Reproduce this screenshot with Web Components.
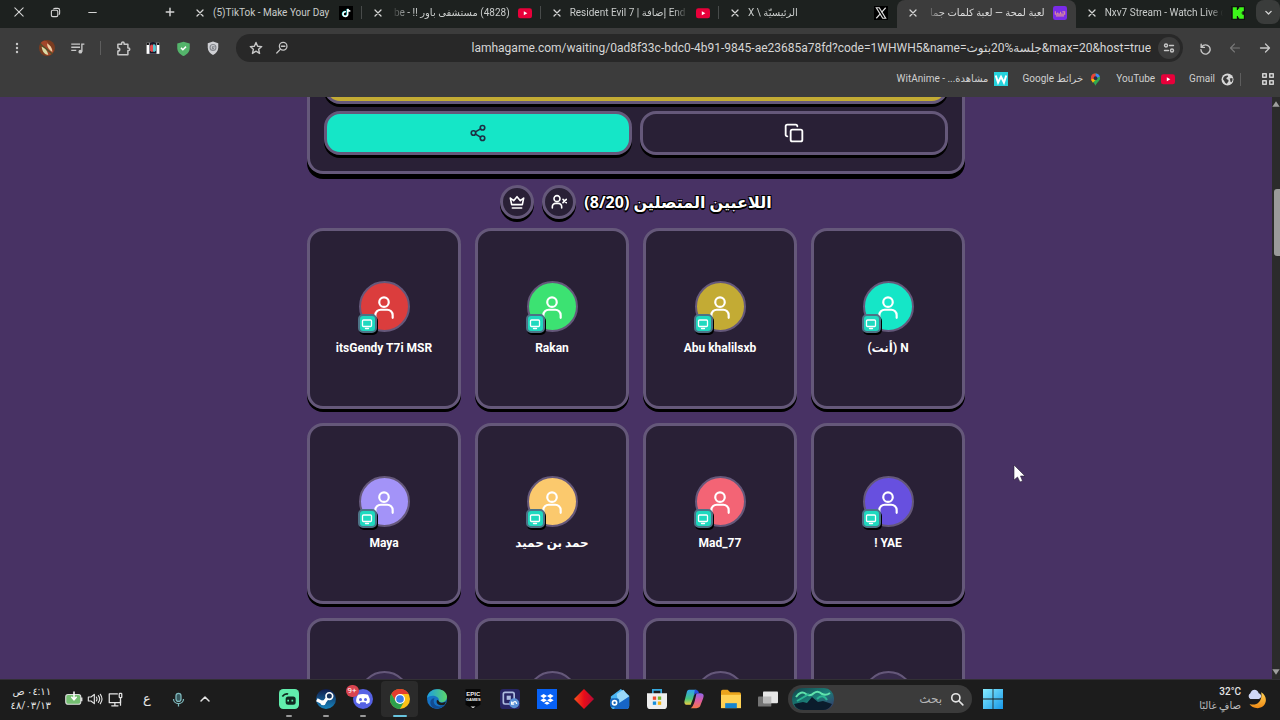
<!DOCTYPE html>
<html lang="ar">
<head>
<meta charset="utf-8">
<title>لعبة لمحة — لعبة كلمات جماعية</title>
<style>
html,body{margin:0;height:100%}
body{background:#1c1c1c;overflow:hidden;font-family:Roboto,"DejaVu Sans",sans-serif;
--line:#65587a;--card:#292036;--mint:#15e6c7;--gold:#c3ab34}
</style>
</head>
<body>
<desk-screen></desk-screen>
<script>
const make=(name,css,html)=>customElements.define(name,class extends HTMLElement{
  constructor(){super();this.attachShadow({mode:'open'})}
  connectedCallback(){
    this.shadowRoot.innerHTML=`<style>*{box-sizing:border-box}button{font:inherit;color:inherit;background:none;border:0;padding:0;margin:0}svg{display:block}a{color:inherit;text-decoration:none}${css}</style>`+(typeof html==='function'?html(this):html);
  }
});

const stroke=(d,w=2)=>`<g fill="none" stroke="currentColor" stroke-width="${w}" stroke-linecap="round" stroke-linejoin="round">${d}</g>`;
const ytube=`<rect x="0" y="4" width="24" height="17" rx="4" fill="#e8003a"/><path d="M10 9v7l6-3.500z" fill="#fff"/>`;
const ICONS={
  close:stroke('<path d="M2 2l20 20M22 2L2 22"/>',2.5),
  tabx:stroke('<path d="M3 3l18 18M21 3L3 21"/>',3.8),
  restore:stroke('<rect x="3" y="7" width="14" height="14" rx="3"/><path d="M8 4q1-1 3-1h6q4 0 4 4v6q0 2-1 3"/>',2.4),
  minus:stroke('<path d="M2 12h20"/>',3),
  plus:stroke('<path d="M12 3v18M3 12h18"/>',3.5),
  tiktok:'<rect width="24" height="24" fill="#000"/><path d="M11 9.500a4 4 0 1 0 3 4V5c1 2.500 2.500 3.500 4.500 3.500" fill="none" stroke="#2de4e4" stroke-width="2.600"/><path d="M12 10a4 4 0 1 0 3 4V5c1 2.500 2.500 3.500 4.500 3.500" fill="none" stroke="#fff" stroke-width="2.600"/>',
  youtube:ytube,
  x:'<rect width="24" height="24" fill="#000"/><path d="M4 3h5l11 18h-5z" fill="none" stroke="#ddd" stroke-width="2"/><path d="M20 3l-7 8M11 13l-7 8" stroke="#ddd" stroke-width="2"/>',
  lamha:'<rect width="24" height="24" rx="4" fill="#7a2be8"/><path d="M4 9v5h4v-3M8 14h5v-4M13 14h7v-4h-4M5 17h14" fill="none" stroke="#d78c9c" stroke-width="2"/>',
  kick:'<rect width="24" height="24" fill="#111"/><path d="M3 2h7v5h2V4.500h2V2h8v7h-2.500v2.500H17v1h2.500V15H22v7h-8v-2.500h-2V17h-2v5H3z" fill="#3df51a"/>',
  down:stroke('<path d="M5 9l7 7 7-7"/>',3.5),
  up:stroke('<path d="M4 16l8-8 8 8"/>',3),
  dots:'<g fill="currentColor"><circle cx="12" cy="4" r="2.400"/><circle cx="12" cy="12" r="2.400"/><circle cx="12" cy="20" r="2.400"/></g>',
  avatar:'<circle cx="12" cy="12" r="12" fill="#7a3c20"/><path d="M3 4c5-5 10-3 12 3l7 9c-2 5-6 8-12 7z" fill="#a3462a"/><path d="M4 10c5 1 8 5 10 12-5 0-9-4-10-12z" fill="#d9dca8"/><path d="M12 5c5 3 8 7 8 13-5-3-8-7-8-13z" fill="#efcfa3"/><path d="M2 6l18 15" stroke="#4c512c" stroke-width="2"/>',
  queue:'<g fill="none" stroke="currentColor" stroke-width="2.200"><path d="M2 5h14M2 10h14M2 15h8M19 17V5h4"/></g><circle cx="16.500" cy="17" r="3" fill="currentColor"/>',
  puzzle:stroke('<path d="M3 5h6V3.500a2 2 0 0 1 4 0V5h6v6h1a2 2 0 0 1 0 4h-1v7H3v-6c4 0 4-5 0-5z"/>',2.4),
  ext:'<rect x="1" y="3" width="22" height="19" fill="#fff"/><path d="M1 3h4v4H1zM19 3h4v4h-4z" fill="#151515"/><path d="M6 3q6-3 12 0v19H6z" fill="#171526"/><path d="M7 8q4-4 5 0v10q-3 2-5-2z" fill="#e34a4d"/><path d="M12 6q4-2 5 3v7q-2 4-5 2z" fill="#58c5cf"/>',
  shieldg:'<path d="M12 1l10 3v7c0 6-4 10-10 13C6 21 2 17 2 11V4z" fill="#54b46b"/><path d="M8 11l3 3 5-5" fill="none" stroke="#fff" stroke-width="2.400"/>',
  shieldw:'<path d="M12 1l9 3v7c0 6-4 10-9 13-5-3-9-7-9-13V4z" fill="#cfd0d4"/><circle cx="12" cy="11" r="5" fill="none" stroke="#85888e" stroke-width="2"/><path d="M15 10h-4v3h3" fill="none" stroke="#85888e" stroke-width="2"/>',
  star:stroke('<path d="M12 2.500l2.800 6.500 7 .6-5.300 4.700 1.600 7L12 17.500l-6.100 3.800 1.600-7L2.200 9.600l7-.6z"/>',2.4),
  zoom:stroke('<circle cx="14" cy="9" r="6.500"/><path d="M9.500 14L3 20.500M11 9h6"/>',2.2),
  tune:stroke('<circle cx="6" cy="7" r="3"/><path d="M13 7h8M3 17h8"/><circle cx="18" cy="17" r="3"/>',2.8),
  reload:stroke('<path d="M4 4v6h6M5 9a8.500 8.500 0 1 1-1.500 5"/>',2.6),
  back:stroke('<path d="M21 12H4M11 4l-8 8 8 8"/>',2.2),
  fwd:stroke('<path d="M3 12h17M13 4l8 8-8 8"/>',2.6),
  wit:'<rect width="24" height="24" fill="#25d3dc"/><path d="M3 6l4 12 5-10 5 10 4-12" fill="none" stroke="#fff" stroke-width="3.500"/>',
  maps:'<path d="M12 1a8.500 8.500 0 0 1 8.500 8.500c0 5-6 7-8.500 14C9.500 16.500 3.500 14.500 3.500 9.500A8.500 8.500 0 0 1 12 1z" fill="#30a952"/><path d="M12 1a8.500 8.500 0 0 1 8 5.500L12 10z" fill="#4285f4"/><path d="M12 1v9L5 15Q3 12 3.500 9A8.500 8.500 0 0 1 12 1z" fill="#ea4335"/><path d="M4 12l6-3 2 4-5 5z" fill="#fbbc04"/><circle cx="12" cy="9.500" r="3.500" fill="#282b48"/>',
  globe:'<circle cx="12" cy="12" r="11" fill="#d7d7d7"/><path d="M4 9c3-4 6-5 9-4 1 3-3 3-3 5 0 2 4 1 4 4s-2 3-3 6c-5-1-4-6-7-7zM16 10l5-1c1 4 0 6-2 8-3-1-1-4-3-7z" fill="#3c3c3c"/>',
  apps:stroke('<path d="M3 3h6v6H3zM15 3h6v6h-6zM3 15h6v6H3zM15 15h6v6h-6z"/>',2.6),
  share:stroke('<circle cx="18" cy="5" r="3"/><circle cx="6" cy="12" r="3"/><circle cx="18" cy="19" r="3"/><path d="M8.600 13.500l6.800 4M15.400 6.500l-6.800 4"/>',2.2),
  copy:stroke('<rect x="8" y="8" width="14" height="14" rx="2"/><path d="M4 16a2 2 0 0 1-2-2V4a2 2 0 0 1 2-2h10a2 2 0 0 1 2 2"/>',2.2),
  crown:stroke('<path d="M2 6l5 4 5-6 5 6 5-4-2 10H4zM5 21h14"/>',2.4),
  kickuser:stroke('<circle cx="9" cy="7" r="4.500"/><path d="M2 21v-2a5 5 0 0 1 5-5h4a5 5 0 0 1 5 5v2M18 8l5 5M23 8l-5 5"/>',2.4),
  user:stroke('<circle cx="12" cy="7.500" r="4.400"/><path d="M4 22v-2.500a5 5 0 0 1 5-5h6a5 5 0 0 1 5 5V22"/>',2),
  screen:stroke('<rect x="3" y="4" width="18" height="13" rx="2"/><path d="M9 21h6"/>',2.6),
  battery:'<rect x="1" y="6" width="20" height="13" rx="3" fill="#75bf72" stroke="#ddd" stroke-width="1.500"/><path d="M22 10v5" stroke="#ddd" stroke-width="2.500"/><path d="M12 2v10M8.500 9l3.500 4 3.500-4" fill="none" stroke="#fff" stroke-width="2"/>',
  volume:stroke('<path d="M2 9h4l5-4v14l-5-4H2zM14 9q2 3 0 6M17 7q4 5 0 10M20 5q5 7 0 14"/>',1.7),
  display:stroke('<path d="M15 3H2v14h18v-4M11 17v4M6 22h10"/><rect x="18" y="2" width="4" height="7" rx="1"/><path d="M20 9v12"/>',2),
  mic:'<g fill="none" stroke="#7fb9bd" stroke-width="2"><rect x="8" y="2" width="8" height="13" rx="4" fill="#36575c"/><path d="M4 11c0 10 16 10 16 0M12 18v5"/></g>',
  streamer:'<rect width="24" height="24" rx="5" fill="#61edac"/><rect x="8" y="9" width="12" height="10" rx="3" fill="#10281f"/><path d="M11 13v2M16 13v2" stroke="#61edac" stroke-width="2"/><path d="M4 9q3-4 7-3" fill="none" stroke="#10281f" stroke-width="2"/>',
  steam:'<defs><linearGradient id="s" x2="0" y2="1"><stop stop-color="#101c4c"/><stop offset="1" stop-color="#1784bd"/></linearGradient></defs><circle cx="12" cy="12" r="12" fill="url(#s)"/><path d="M1 13l8 4 6-8" fill="none" stroke="#fff" stroke-width="4"/><circle cx="16" cy="8.500" r="4" fill="#17345e" stroke="#fff" stroke-width="2"/><circle cx="8.500" cy="16.500" r="3" fill="#fff"/>',
  discord:'<circle cx="12" cy="12" r="12" fill="#5662e5"/><path d="M6 7q6-2 12 0 3 5 2 9-2 2-4 2l-1-2H9l-1 2q-2 0-4-2-1-4 2-9z" fill="#fff"/><circle cx="9" cy="12.500" r="1.800" fill="#5662e5"/><circle cx="15" cy="12.500" r="1.800" fill="#5662e5"/>',
  chrome:'<circle cx="12" cy="12" r="12" fill="#fbc116"/><path d="M1.600 6A12 12 0 0 1 22.400 6H12L7 15z" fill="#e33b2e"/><path d="M1.600 6A12 12 0 0 0 12 24l5-9H7z" fill="#2da14c"/><circle cx="12" cy="12" r="6" fill="#fff"/><circle cx="12" cy="12" r="4.600" fill="#3a7de8"/>',
  edge:'<defs><linearGradient id="e"><stop stop-color="#1b9de2"/><stop offset="1" stop-color="#5bd66a"/></linearGradient></defs><circle cx="12" cy="12" r="12" fill="#1673c5"/><path d="M0 11C1-3 23-3 24 9c0 8-9 8-10 5 2-5-9-9-14-3z" fill="url(#e)"/><path d="M9 11c-4 8 5 13 12 8-5 7-17 6-17-3 0-3 2-5 5-5z" fill="#124b91"/><path d="M14 14c1 3 6 3 9 1l-2 4c-6 2-11-1-9-6z" fill="#1c1c1c"/>',
  epic:'<path d="M3 0h18v19l-9 5-9-5z" fill="#070707"/><path d="M9 21h6l-3 2z" fill="#ddd"/>',
  sheets:'<rect width="24" height="24" rx="4" fill="#282665"/><rect x="4" y="4" width="13" height="14" rx="2" fill="none" stroke="#aebcdf" stroke-width="2"/><path d="M8 8h5v5H8z" fill="#aebcdf"/><circle cx="17" cy="17" r="6" fill="#5a90d8"/><path d="M14 15v3h3M15 17q4-4 5 1" fill="none" stroke="#fff" stroke-width="1.500"/>',
  dropbox:'<rect width="24" height="24" fill="#0761f5"/><path d="M8 6l4 2.500L8 11 4 8.500zM16 6l4 2.500-4 2.500-4-2.500zM8 11l4 2.500L8 16l-4-2.500zM16 11l4 2.500-4 2.500-4-2.500zM12 15l3.500 2-3.500 2-3.500-2z" fill="#fff"/>',
  ruby:'<defs><linearGradient id="r"><stop stop-color="#f6531d"/><stop offset=".5" stop-color="#e80c19"/><stop offset="1" stop-color="#b50a36"/></linearGradient></defs><path d="M12 0l12 12-12 12L0 12z" fill="url(#r)"/>',
  outlook:'<path d="M1 9L13 0l10 8v12q0 4-4 4H5q-4 0-4-4z" fill="#4ab5f4"/><path d="M8 6l8-5 7 8-13 9z" fill="#98d8fa"/><path d="M6 20L23 9v11q0 4-4 4H5z" fill="#1665c6"/><rect y="11" width="11" height="11" rx="3" fill="#1767ba"/><circle cx="5.500" cy="16.500" r="2.500" fill="none" stroke="#fff" stroke-width="2"/>',
  store:'<path d="M7 6V1h10v5" fill="none" stroke="#35a9df" stroke-width="2"/><path d="M0 5h24v15q0 4-4 4H4q-4 0-4-4z" fill="#eee"/><path d="M7 9h4v4H7z" fill="#eb4c2e"/><path d="M13 9h4v4h-4z" fill="#75b829"/><path d="M7 15h4v4H7z" fill="#168fdc"/><path d="M13 15h4v4h-4z" fill="#f4b514"/>',
  copilot:'<defs><linearGradient id="c1" x2="0" y2="1"><stop stop-color="#32a2f0"/><stop offset=".6" stop-color="#47c77d"/><stop offset="1" stop-color="#f0cd3f"/></linearGradient><linearGradient id="c2" x2="0" y2="1"><stop stop-color="#8d67eb"/><stop offset=".5" stop-color="#dd5ba0"/><stop offset="1" stop-color="#f57848"/></linearGradient></defs><path d="M6 1h9q-2 2-4 10l-3 8H4q-5 0-3-6L3 5q1-4 3-4z" fill="url(#c1)"/><path d="M20 5q5 0 3 6l-3 8q-1 4-5 4H8q3-2 5-9l2-9z" fill="url(#c2)"/><path d="M13 1q4 0 5 4h-3q-2 0-3 3z" fill="#294de0"/>',
  folder:'<path d="M0 3q0-2 2-2h6l3 3h11q2 0 2 2v16H0z" fill="#eaa41c"/><path d="M0 7h24v16H0z" fill="#ffd255"/><path d="M5 17h14v6H5z" fill="#1685cf"/>',
  tasks:'<rect y="9" width="16" height="12" rx="1" fill="#747474"/><rect x="6" y="3" width="18" height="14" rx="1" fill="#e6e6e6"/><path d="M6 9h10v8H6z" fill="#bbb"/>',
  search:stroke('<circle cx="10" cy="10" r="7"/><path d="M15 15l7 7"/>',2.8),
  windows:'<defs><linearGradient id="w" x2="1" y2="1"><stop stop-color="#86ecff"/><stop offset="1" stop-color="#1797e8"/></linearGradient></defs><path d="M0 0h11.500v11.500H0zM12.500 0H24v11.500H12.500zM0 12.500h11.500V24H0zM12.500 12.500H24V24H12.500z" fill="url(#w)"/>',
  moon:'<defs><linearGradient id="m" x2="0" y2="1"><stop stop-color="#ffd154"/><stop offset="1" stop-color="#f08a14"/></linearGradient></defs><path d="M17 4c9 5 7 18-4 19-5 0-8-2-10-5 9 3 16-4 14-14z" fill="url(#m)"/><path d="M4 12a4 4 0 0 1 0-7c2-6 9-5 10 0 4 1 4 6 0 7z" fill="#ced6f5"/>',
  sup:'<path d="M12 4l11 16H1z" fill="currentColor"/>',
  sdown:'<path d="M1 4h22L12 20z" fill="currentColor"/>'
};
make('ui-icon',`:host{display:block;flex:none;width:var(--s,16px);height:var(--s,16px)}svg{width:100%;height:100%}`,
  e=>`<svg viewBox="0 0 24 24" aria-hidden="true">${ICONS[e.getAttribute('name')]}</svg>`);
const ic=(n,s=16)=>`<ui-icon name="${n}" style="--s:${s}px"></ui-icon>`;

make('browser-tab',`
:host{display:flex;align-items:center;min-width:0;height:28px;padding:0 9px 3px 11px;position:relative;color:#c9cccb;font-size:10px}
:host([active]){background:#3c3c3c;border-radius:8px 8px 0 0;color:#dedede}
:host([line])::after{content:"";position:absolute;right:0;top:6px;width:1px;height:13px;background:#484b4a}
button{width:10px;display:grid;place-items:center;color:#d5d5d5}
.t{flex:1;min-width:0;margin:0 8px;overflow:hidden;white-space:nowrap;line-height:20px}
.t[dir=ltr]{-webkit-mask:linear-gradient(90deg,#000 88%,transparent)}
.t[dir=rtl]{-webkit-mask:linear-gradient(270deg,#000 85%,transparent)}
:host([whole]) .t{-webkit-mask:none}`,
e=>`<button aria-label="إغلاق">${ic('tabx',8)}</button><span class="t" dir="${e.getAttribute('d')}"><slot></slot></span>${ic(e.getAttribute('icon'),14)}`);

make('tab-strip',`
:host{display:grid;grid-template-columns:184px 1fr 26px;height:28px;background:#1d211f;color:#d5d5d5}
.win{display:flex;align-items:center;padding-bottom:4px}
.win button{width:37px;display:grid;place-items:center}
.win button:last-child{margin-left:auto;width:28px}
.tabs{display:grid;grid-template-columns:repeat(6,minmax(0,1fr))}
.more{width:24px;height:24px;border-radius:8px;background:#3a3c3b;justify-self:end;display:grid;place-items:center}`,
`<div class="win"><button aria-label="إغلاق">${ic('close',10)}</button><button aria-label="استعادة">${ic('restore',11)}</button><button aria-label="تصغير">${ic('minus',9)}</button><button aria-label="علامة تبويب جديدة">${ic('plus',10)}</button></div>
<nav class="tabs">
<browser-tab d="ltr" icon="tiktok" line whole>(5)TikTok - Make Your Day</browser-tab>
<browser-tab d="rtl" icon="youtube" line>(4828) مستشفى باور !! - be</browser-tab>
<browser-tab d="ltr" icon="youtube" line>Resident Evil 7 | إضافة End</browser-tab>
<browser-tab d="ltr" icon="x">X \\ الرئيسيّة</browser-tab>
<browser-tab d="rtl" icon="lamha" active>لعبة لمحة — لعبة كلمات جما</browser-tab>
<browser-tab d="ltr" icon="kick">Nxv7 Stream - Watch Live o</browser-tab>
</nav><button class="more" aria-label="البحث في علامات التبويب">${ic('down',9)}</button>`);

make('tool-bar',`
:host{display:flex;align-items:center;height:40px;padding-left:2px;background:#3c3c3c;color:#c7c7c7}
.b{width:30px;height:30px;display:grid;place-items:center;flex:none}
.sep{width:16px;display:grid;place-items:center}.sep::after{content:"";width:1px;height:14px;background:#5e5e5e}
.omni{flex:1;min-width:0;display:flex;align-items:center;height:28px;margin:0 7px 0 8px;padding:0 3px 0 7px;border-radius:14px;background:#282828}
.omni .s{width:26px;display:grid;place-items:center}
input{flex:1;min-width:0;border:0;outline:0;background:none;color:#d6d6d6;font:12px/20px Roboto,"DejaVu Sans",sans-serif;text-align:right;padding:0 7px 0 0}
.tune{width:22px;height:22px;border-radius:50%;background:#3c3c3c;display:grid;place-items:center}
.off{color:#777}`,
`<button class="b" aria-label="القائمة">${ic('dots',12)}</button><button class="b" aria-label="الملف الشخصي">${ic('avatar',16)}</button><button class="b" aria-label="الوسائط">${ic('queue',15)}</button><span class="sep"></span>
<button class="b" aria-label="الإضافات">${ic('puzzle',15)}</button><button class="b" aria-label="إضافة">${ic('ext',14)}</button><button class="b" aria-label="الحماية">${ic('shieldg',15)}</button><button class="b" aria-label="الخصوصية">${ic('shieldw',14)}</button>
<div class="omni"><button class="s" aria-label="إشارة مرجعية">${ic('star',14)}</button><button class="s" aria-label="تكبير">${ic('zoom',14)}</button>
<input type="text" dir="ltr" aria-label="العنوان" value="lamhagame.com/waiting/0ad8f33c-bdc0-4b91-9845-ae23685a78fd?code=1WHWH5&amp;name=جلسة%20بثوث&amp;max=20&amp;host=true">
<button class="tune" aria-label="معلومات الموقع">${ic('tune',12)}</button></div>
<button class="b" aria-label="إعادة التحميل">${ic('reload',13)}</button><button class="b off" aria-label="التالي">${ic('back',12)}</button><button class="b" aria-label="السابق">${ic('fwd',12)}</button>`);

make('bookmark-bar',`
:host{display:flex;align-items:center;justify-content:flex-end;gap:14px;height:29px;padding:0 5px 7px 0;background:#3c3c3c;color:#cfcfcf;font-size:10px;line-height:20px}
a{display:flex;align-items:center;gap:6px;white-space:nowrap}
i{width:1px;height:13px;background:#5e5e5e;margin:0 6px 0 -8px}`,
`<a href="#w"><span dir="rtl">مشاهدة... - WitAnime</span>${ic('wit',14)}</a><a href="#m"><span dir="rtl">خرائط Google</span>${ic('maps',13)}</a><a href="#y"><span>YouTube</span>${ic('youtube',14)}</a><a href="#g"><span>Gmail</span>${ic('globe',13)}</a><i></i><a href="#apps" aria-label="التطبيقات">${ic('apps',14)}</a>`);

make('game-button',`
:host{display:block}
button{display:grid;place-items:center;width:100%;height:44px;border:3px solid var(--line);border-radius:16px;background:var(--bg,var(--card));color:var(--fg,#fff);box-shadow:0 3px #000}
:host([round]) button{width:34px;height:34px;border-radius:50%}`,
e=>`<button aria-label="${e.getAttribute('label')}">${ic(e.getAttribute('icon'),+e.getAttribute('size'))}</button>`);

make('invite-panel',`
:host{display:block;height:77px;padding:0 14px;border:3px solid var(--line);border-top:0;border-radius:0 0 16px 16px;background:var(--card);box-shadow:0 5px #000}
.code{display:flex;align-items:flex-end;height:10px;margin-bottom:4px;padding-bottom:3px;overflow:hidden}
.code div{flex:1;height:44px;border:3px solid var(--line);border-radius:16px;background:var(--gold);box-shadow:0 3px #000}
.row{display:grid;grid-template-columns:1fr 1fr;gap:8px}`,
`<div class="code"><div></div></div><div class="row"><game-button label="مشاركة" icon="share" size="18" style="--bg:var(--mint);--fg:#1d3145"></game-button><game-button label="نسخ" icon="copy" size="20"></game-button></div>`);

make('player-card',`
:host{display:flex;flex-direction:column;align-items:center;justify-content:center;gap:8px;height:181px;border:3px solid var(--line);border-radius:16px;background:var(--card);box-shadow:0 3px #000;color:#fff}
.a{position:relative;width:51px;height:51px;border:2px solid var(--line);border-radius:50%;background:var(--c,#372b4b);display:grid;place-items:center}
.b{position:absolute;left:-3px;bottom:-3px;width:19px;height:19px;border:2px solid #4d7286;border-radius:5px;background:#1fd9bf;box-shadow:1px 2px #000;display:grid;place-items:center}
.n{height:16px;font:700 12px/16px Roboto,"DejaVu Sans",sans-serif;white-space:nowrap}`,
e=>e.hasAttribute('empty')?`<div class="a"></div><div class="n"></div>`:`<div class="a">${ic('user',26)}<span class="b">${ic('screen',12)}</span></div><div class="n" dir="rtl"><slot></slot></div>`);

make('game-page',`
:host{display:grid;grid-template-columns:1fr 8px;flex:1;min-height:0;overflow:hidden;background:#483264}
main{min-width:0;overflow:hidden;padding:0 16px}
.col{width:100%;max-width:658px;margin:0 auto}
header{display:flex;align-items:center;justify-content:center;gap:8px;height:34px;margin:11px 0 9px}
h2{margin:0;color:#fff;font:700 16px/26px "Noto Sans","DejaVu Sans",sans-serif;white-space:nowrap;text-shadow:1px 1px #000,-1px -1px #000,1px -1px #000,-1px 1px #000,0 2px #000}
.grid{display:grid;grid-template-columns:repeat(4,minmax(0,1fr));gap:14px}
.bar{display:flex;flex-direction:column;align-items:center;background:#2b2b2b;color:#9f9f9f;padding:3px 0}
.bar i{width:6px;height:67px;margin:81px 0 auto 2px;border-radius:3px 0 0 3px;background:#9a9a9a}`,
`<main><div class="col"><invite-panel></invite-panel>
<header><game-button round label="المضيف" icon="crown" size="16"></game-button><game-button round label="إزالة لاعب" icon="kickuser" size="16"></game-button><h2 dir="rtl">اللاعبين المتصلين (8/20)</h2></header>
<section class="grid">
<player-card style="--c:#db3d3d">itsGendy T7i MSR</player-card><player-card style="--c:#3ce272">Rakan</player-card><player-card style="--c:#c3ab34">Abu khalilsxb</player-card><player-card style="--c:#15e6c7">N (أنت)</player-card>
<player-card style="--c:#a393f8">Maya</player-card><player-card style="--c:#fbc96d">حمد بن حميد</player-card><player-card style="--c:#f36475">Mad_77</player-card><player-card style="--c:#6750df">YAE !</player-card>
<player-card empty></player-card><player-card empty></player-card><player-card empty></player-card><player-card empty></player-card>
</section></div></main>
<div class="bar">${ic('sup',8)}<i></i>${ic('sdown',8)}</div>`);

make('task-bar',`
:host{display:flex;align-items:center;height:41px;padding-bottom:2px;border-top:1px solid #323035;background:#1c1c1c;color:#e4e4e4;box-sizing:border-box}
.tray{display:flex;align-items:center;width:271px;padding-left:13px;font-size:10px;line-height:14px}
.clock{width:50px;white-space:nowrap}
.clock div{width:38px;text-align:center}
.tray button{display:grid;place-items:center;width:21px}
.tray .k{width:42px;font-size:13px}.tray .m{width:20px}.tray .u{width:34px}
.apps{display:grid;grid-template-columns:repeat(14,minmax(0,1fr));width:515px}
.apps button{position:relative;height:36px;display:grid;place-items:center}
.apps .run::after{content:"";position:absolute;bottom:0;left:calc(50% - 3px);width:6px;height:2px;border-radius:1px;background:#999}
.apps .on{background:#2b2b2b;border-radius:4px}
.apps .on::after{left:calc(50% - 7px);width:14px;background:#68c5df}
em{position:absolute;left:1px;top:4px;width:13px;height:12px;border-radius:6px;background:#d94450;color:#fff;font:8px/12px Roboto,sans-serif}
.epic{position:absolute;left:0;right:0;top:10px;font:700 6px/7px "Liberation Sans",sans-serif;color:#eee}
.epic small{display:block;font-size:4px;line-height:4px}
label{display:flex;align-items:center;gap:8px;width:184px;height:28px;margin-left:2px;padding:0 8px 0 4px;border-radius:14px;background:#3b3b3b}
.aur{width:42px;height:22px;flex:none}
input{flex:1;min-width:0;border:0;outline:0;background:none;font:12px/20px Roboto,"DejaVu Sans",sans-serif;padding:0}
input::placeholder{color:#b5b5b5;opacity:1}
.start{margin-left:11px}
.wx{display:flex;align-items:center;gap:6px;margin-left:auto;padding-right:13px;font-size:10px;line-height:14px;text-align:right}
.wx b{font-weight:500;display:block}.wx span{display:block;color:#bdbdbd}`,
`<div class="tray"><div class="clock"><div dir="rtl">٠٤:١١ ص</div><div dir="rtl">٤٨/٠٣/١٣</div></div>
<button aria-label="البطارية">${ic('battery',18)}</button><button aria-label="الصوت">${ic('volume',16)}</button><button aria-label="الشاشة">${ic('display',15)}</button><button class="k" aria-label="لغة الإدخال">ع</button><button class="m" aria-label="الميكروفون">${ic('mic',15)}</button><button class="u" aria-label="الأيقونات المخفية">${ic('up',12)}</button></div>
<div class="apps">${[['streamer','run'],['steam','run'],['discord','run','<em>9+</em>'],['chrome','run on'],['edge'],['epic','','<span class="epic">EPIC<small>GAMES</small></span>'],['sheets'],['dropbox'],['ruby'],['outlook'],['store'],['copilot'],['folder'],['tasks']].map(([n,c='',x=''])=>`<button class="${c}" aria-label="${n}">${ic(n,20)}${x}</button>`).join('')}</div>
<label><svg class="aur" viewBox="0 0 42 22" aria-hidden="true"><defs><linearGradient id="a" x2="1" y2="1"><stop stop-color="#12424a"/><stop offset=".5" stop-color="#1b7f78"/><stop offset="1" stop-color="#38316a"/></linearGradient></defs><rect width="42" height="22" rx="10" fill="url(#a)"/><path d="M4 9q5-7 10-3 4 3 8-1 4-3 8 1 4 2 8-1" fill="none" stroke="#5fe3ac" stroke-width="2"/><path d="M5 13q7-4 12-7M25 11q6-6 10 1" fill="none" stroke="#2bb593" stroke-width="2"/><path d="M2 16l9-2 4 1 5-6 6 5 5-1 9 3q-3 6-9 6H12q-8 0-10-6z" fill="#0b1c2c"/></svg><input type="search" dir="rtl" placeholder="بحث" aria-label="بحث">${ic('search',14)}</label>
<button class="start" aria-label="ابدأ">${ic('windows',20)}</button>
<div class="wx"><div><b>32°C</b><span dir="rtl">صافٍ غالبًا</span></div>${ic('moon',20)}</div>`);

make('desk-screen',`
:host{display:flex;flex-direction:column;height:100vh;position:relative}
.cur{position:absolute;left:1013px;top:464px;width:12px;height:19px}`,
`<tab-strip></tab-strip><tool-bar></tool-bar><bookmark-bar></bookmark-bar><game-page></game-page><task-bar></task-bar>
<svg class="cur" viewBox="0 0 12 19" aria-hidden="true"><path d="M1 1v15l3.500-3 2.500 5 2.500-1-2-5H12z" fill="#fff" stroke="#2a2038" stroke-width=".6"/></svg>`);
</script>
</body>
</html>
